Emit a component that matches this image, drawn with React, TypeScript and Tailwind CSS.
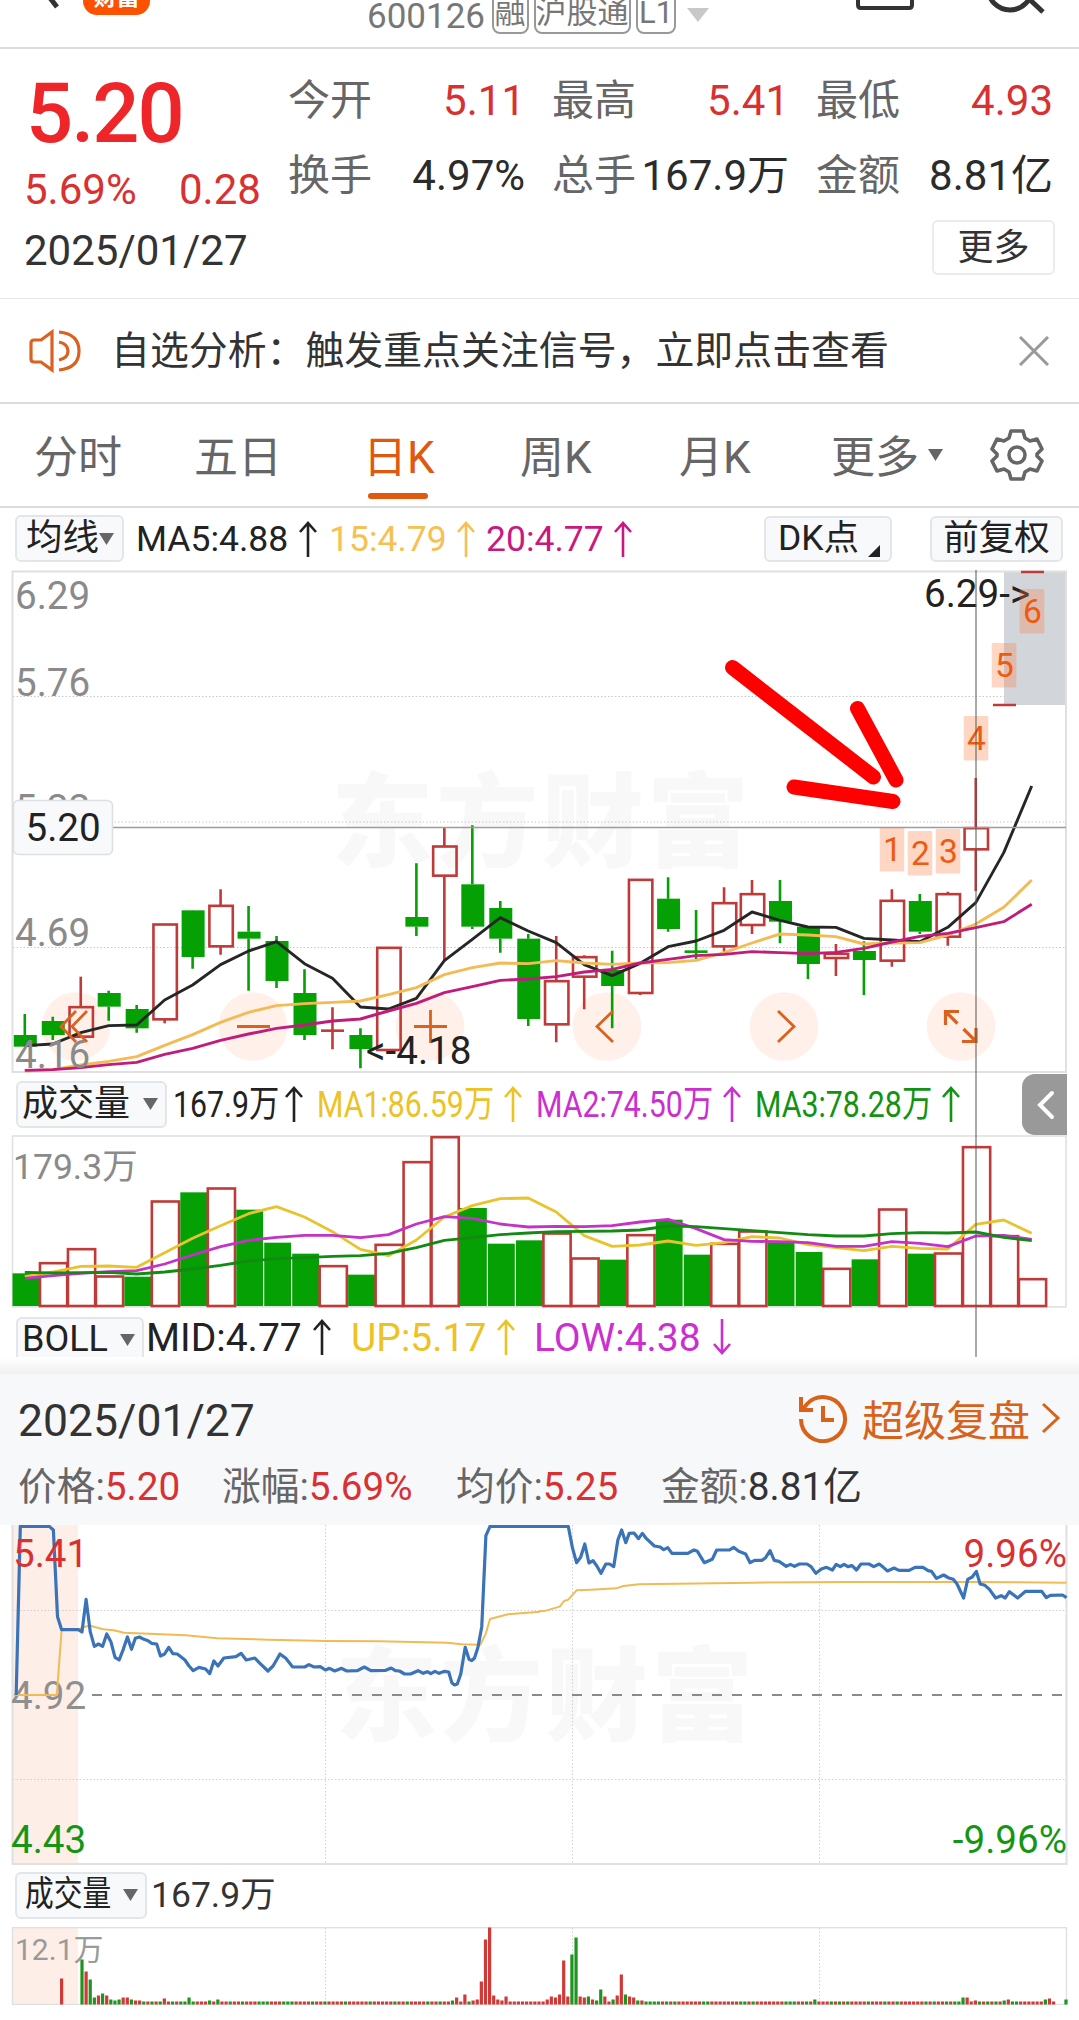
import type { ReactNode } from 'react';

type Candle = ['r' | 'g', number, number, number, number];

// [direction, high, body top, body bottom, low]
const candles: Candle[] = [
  ['g', 612, 675, 710, 710], ['g', 620, 633, 675, 690], ['r', 500, 590, 680, 680], ['g', 542, 549, 590, 632],
  ['g', 585, 597, 655, 668], ['r', 342, 342, 628, 640], ['g', 300, 301, 441, 476], ['r', 238, 286, 409, 434],
  ['g', 288, 365, 386, 542], ['g', 378, 393, 513, 534], ['g', 478, 549, 675, 690], ['r', 592, 662, 662, 718],
  ['g', 655, 675, 717, 775], ['r', 412, 412, 720, 720], ['g', 160, 321, 350, 378], ['r', 54, 108, 197, 450],
  ['g', 46, 223, 350, 357], ['g', 273, 294, 386, 428], ['g', 372, 386, 627, 648], ['r', 378, 512, 643, 697],
  ['r', 436, 440, 500, 598], ['g', 422, 480, 528, 655], ['r', 208, 208, 549, 555], ['g', 202, 266, 357, 365],
  ['g', 300, 425, 425, 447], ['r', 232, 278, 409, 425], ['r', 210, 251, 345, 372], ['g', 210, 273, 335, 400],
  ['g', 350, 350, 462, 507], ['r', 402, 430, 444, 498], ['g', 394, 423, 450, 555], ['r', 238, 271, 452, 470],
  ['g', 252, 273, 365, 372], ['r', 245, 251, 380, 407], ['r', -96, 53, 118, 243],
];

const ma5 = [707, 702, 668, 647, 645, 570, 525, 464, 423, 395, 461, 505, 591, 597, 565, 452, 388, 323, 363, 398, 464, 497, 460, 410, 393, 361, 306, 331, 351, 352, 385, 390, 395, 352, 278, 128, -72];
const ma15 = [783, 779, 765, 754, 740, 706, 674, 637, 607, 587, 581, 577, 573, 554, 533, 494, 473, 459, 461, 452, 459, 463, 459, 458, 451, 428, 399, 372, 375, 380, 402, 399, 398, 375, 342, 292, 210];
const ma20 = [781, 779, 773, 764, 757, 733, 715, 691, 672, 655, 645, 633, 627, 603, 580, 548, 530, 511, 507, 500, 486, 478, 459, 448, 437, 433, 425, 428, 431, 427, 415, 396, 379, 370, 353, 335, 283];

const volumes = [610, 578, 536, 618, 620, 393, 367, 354, 419, 518, 551, 587, 614, 523, 275, 200, 414, 521, 511, 489, 564, 569, 494, 449, 554, 520, 483, 517, 546, 595, 568, 417, 551, 549, 230, 497, 626];
const volumeColors = 'grrrgrgrgggrgrrrgggrrgrggrrggrgrgrrrr';
const vol5 = [620, 606, 589, 588, 592, 548, 505, 467, 431, 410, 441, 485, 538, 557, 510, 441, 407, 386, 384, 426, 497, 529, 525, 513, 526, 518, 500, 504, 524, 533, 542, 529, 535, 537, 463, 450, 490];
const vol10 = [625, 617, 610, 605, 602, 582, 555, 530, 511, 502, 496, 496, 503, 494, 462, 440, 445, 462, 471, 469, 470, 467, 456, 448, 476, 509, 514, 515, 518, 529, 529, 515, 520, 530, 498, 496, 508];
const vol20 = [607, 609, 608, 607, 612, 606, 597, 586, 573, 566, 563, 559, 557, 550, 533, 511, 503, 494, 489, 485, 484, 483, 480, 468, 470, 476, 482, 488, 494, 498, 498, 491, 488, 489, 486, 502, 512];

const priceMorning = '47,975 59,469 143,469 155,480 167,740 179,779 227,779 238,786 250,688 262,785 274,829 286,822 298,829 310,792 322,815 334,862 346,870 358,838 370,801 382,838 393,805 405,801 418,808 430,812 440,820 455,822 466,858 478,852 490,832 502,851 515,852 537,870 549,888 561,902 578,892 597,897 609,911 621,873 633,888 650,864 685,860 700,850 715,870 740,864 755,880 778,903 793,888 813,852 830,865 850,891 885,891 897,884 912,891 930,890 945,900 957,895 972,903 992,895 1007,903 1038,902 1058,891 1077,902 1120,901 1136,894 1148,902 1160,903 1175,912 1192,912 1214,902 1229,910 1241,905 1251,911 1263,904 1275,910 1291,904 1303,906 1312,938 1320,945 1328,942 1338,912 1351,832 1362,868 1370,872 1378,864 1388,832 1399,770 1411,497 1423,469 1570,469';
const priceAfternoon = '0,469 85,469 97,533 109,578 121,562 133,522 145,579 157,572 168,588 180,610 194,582 205,582 217,590 229,510 240,480 252,518 262,490 276,489 289,506 300,490 312,506 335,528 352,531 362,539 374,533 386,550 432,550 450,540 460,544 480,578 503,568 516,540 553,540 565,532 580,544 600,552 613,578 626,571 648,571 658,563 671,542 683,571 697,574 718,589 730,583 742,589 756,582 778,582 790,590 804,610 820,597 835,592 852,600 863,583 875,590 886,583 897,590 909,587 922,600 935,582 958,582 972,590 988,582 1000,592 1012,603 1031,594 1045,601 1075,601 1092,592 1115,592 1130,602 1140,604 1154,625 1175,615 1190,624 1203,628 1214,642 1233,684 1245,628 1258,621 1270,604 1281,642 1295,646 1308,658 1326,684 1342,677 1354,684 1366,665 1390,684 1413,664 1460,664 1473,683 1485,676 1520,675 1532,683';
const avgMorning = '40,975 165,975 179,779 227,779 240,772 262,767 300,778 330,781 360,788 450,792 540,796 630,805 780,809 950,813 1100,814 1300,818 1340,823 1395,824 1411,790 1423,747 1475,733 1568,725';
const avgAfternoon = '0,724 20,722 60,710 73,693 85,689 109,661 150,659 225,655 245,648 290,643 400,641 620,638 900,636 1230,636 1532,638';

const minuteHeights: Record<number, number> = {
  0: 45, 1: 33, 2: 25, 3: 7, 4: 9, 5: 11, 6: 9, 7: 5, 8: 4, 9: 5, 10: 7, 11: 7, 12: 5, 13: 4, 14: 4, 20: 6, 26: 7, 31: 4, 33: 5,
  90: 4, 91: 7, 93: 10, 95: 4, 96: 5, 97: 23, 98: 65, 99: 77, 100: 9, 101: 5, 102: 4, 103: 8,
  113: 5, 114: 8, 115: 7, 116: 10, 117: 44, 118: 8, 119: 50, 120: 67, 121: 8, 122: 7, 123: 8, 124: 5, 125: 4, 126: 15, 127: 8,
  129: 5, 130: 9, 131: 30, 132: 10, 133: 8, 134: 7, 135: 4, 136: 4, 178: 5, 214: 7, 215: 7, 217: 4, 224: 4, 225: 5, 234: 5, 235: 6, 237: 0, 238: 0, 239: 5,
};
const minuteGreen = new Set([
  0, 2, 3, 5, 7, 8, 9, 12, 15, 17, 19, 22, 24, 25, 26, 27, 31, 33, 36, 39, 43, 44, 45, 49, 50, 51, 56, 59, 64, 70, 76, 79, 84, 87, 90, 94,
  119, 120, 123, 125, 126, 129, 132, 135, 137, 138, 139, 140, 142, 144, 151, 152, 160, 161, 163, 171, 172, 173, 176, 178,
  182, 184, 186, 191, 195, 198, 205, 207, 210, 212, 213, 214, 218, 220, 222, 224, 226, 227, 234, 239,
]);

const RED = '#bf3a38';
const GREEN = '#04a004';

const slotX = (i: number) => 24.8 + i * 27.97;
const candleY = (v: number) => 810 + v / 3;
const volumeY = (v: number) => 1070 + v / 3;
const line = (values: number[], y: (v: number) => number) => values.map((v, i) => `${slotX(i)},${y(v)}`).join(' ');

const Arrow = ({ down = false, className = '' }: { down?: boolean; className?: string }) => (
  <svg width="18" height="36" viewBox="0 0 18 36" fill="none" stroke="currentColor" strokeWidth="2.6" className={`shrink-0 ${down ? 'rotate-180' : ''} ${className}`}>
    <path d="M9 36V2M1 11L9 2l8 9" />
  </svg>
);

const Caret = ({ className = '' }: { className?: string }) => (
  <svg width="15" height="12" viewBox="0 0 15 12" className={`shrink-0 ${className}`}>
    <path d="M0 0h15L7.5 12z" fill="currentColor" />
  </svg>
);

// Text drawn narrower than its font, kept in a box of the narrowed width
const Narrow = ({ width, children }: { width: string; children: ReactNode }) => (
  <span className={`inline-block shrink-0 whitespace-nowrap ${width}`}>
    <span className="inline-block origin-left scale-x-[0.81]">{children}</span>
  </span>
);

const Field = ({ label, value, red = false }: { label: string; value: string; red?: boolean }) => (
  <div className="flex h-[75px] w-[237px] items-center justify-between whitespace-nowrap">
    <span className="text-[#666]">{label}</span>
    <span className={red ? 'text-[#d93032]' : 'text-[#2b2b2b]'}>{value}</span>
  </div>
);

const Header = () => (
  <header className="relative h-[49px] overflow-hidden border-b-2 border-[#dcdcdc]">
    <svg width="70" height="12" className="absolute left-0 top-0">
      <path d="M40 -15L57 7" stroke="#333" strokeWidth="5" />
    </svg>
    <div className="absolute -top-10 left-[83px] flex h-[55px] w-[67px] items-end justify-center rounded-[14px] bg-[#fe5100] pb-[5px] text-[23px] font-bold leading-[24px] text-white">财富</div>
    <div className="flex h-[34px] items-center pl-[367px] text-[35px] leading-[34px] text-[#777]">
      <span className="w-[125px]">600126</span>
      <div className="-mt-3 flex gap-[5px] text-[31px] leading-[46px]">
        <span className="h-[46px] w-[37px] rounded-lg border-2 border-[#999] text-center"><span className="-ml-px">融</span></span>
        <span className="h-[46px] w-[97px] rounded-lg border-2 border-[#999] text-center"><span className="-ml-px">沪股通</span></span>
        <span className="h-[46px] w-[40px] rounded-lg border-2 border-[#999] text-center">L1</span>
      </div>
      <svg width="22" height="14" className="ml-[11px] mt-[-4px]"><path d="M0 0h22L11 14z" fill="#c8c8c8" /></svg>
    </div>
    <svg width="220" height="20" className="absolute left-[850px] top-0" fill="none" stroke="#333">
      <path d="M8 -20V5q0 3 3 3h48q3 0 3-3V-20" strokeWidth="4" />
      <circle cx="160" cy="-12" r="22" strokeWidth="5" />
      <path d="M176 -4L193 12" strokeWidth="5" />
    </svg>
  </header>
);

const Quote = () => (
  <section className="h-[250px] border-b border-[#e8e8e8] text-[42px]">
    <div className="flex h-[168px]">
      <div className="w-[288px] shrink-0 pl-[24px] pt-5 text-[#d93032]">
        <div className="h-[90px] pl-[2px] text-[83px] font-medium leading-[90px] tracking-[-2px] text-[#ee2529]">5.20</div>
        <div className="flex h-[60px] items-center">
          <span className="w-[155px]">5.69%</span>
          <span>0.28</span>
        </div>
      </div>
      <div className="flex w-[765px] shrink-0 flex-wrap content-start gap-x-[27px] pt-[14px]">
        <Field label="今开" value="5.11" red />
        <Field label="最高" value="5.41" red />
        <Field label="最低" value="4.93" red />
        <Field label="换手" value="4.97%" />
        <Field label="总手" value="167.9万" />
        <Field label="金额" value="8.81亿" />
      </div>
    </div>
    <div className="flex justify-between pl-[24px] pr-6">
      <span className="h-[68px] leading-[68px] text-[#333]">2025/01/27</span>
      <button className="mt-[3px] h-[55px] w-[123px] rounded-md border-2 border-[#ebebeb] text-[36px] leading-[50px] text-[#333]">更多</button>
    </div>
  </section>
);

const Notice = () => (
  <section className="flex h-[105px] items-center border-b-2 border-[#dcdcdc] pl-7 text-[38.9px] text-[#333]">
    <svg width="54" height="44" viewBox="0 0 54 44" fill="none" stroke="#d9621f" strokeWidth="3.2">
      <path d="M24 3v38L13 33H6q-3 0-3-3V14q0-3 3-3h7zM31 3q20 2 20 19T31 41M31 13q9 2 9 9t-9 9" />
    </svg>
    <span className="ml-[29px] mt-[2px] whitespace-nowrap">自选分析：触发重点关注信号，立即点击查看</span>
    <svg width="30" height="30" className="ml-auto mr-[30px]" stroke="#999" strokeWidth="3"><path d="M1 1l28 28M29 1L1 29" /></svg>
  </section>
);

const Tabs = () => (
  <nav className="flex h-[104px] items-center border-b-2 border-[#dcdcdc] pl-[34px] text-[44px] leading-[60px] text-[#666]">
    <span className="w-[160px] pt-[5px]">分时</span>
    <span className="w-[169px] pt-[5px]">五日</span>
    <span className="relative w-[157px] pt-[5px] text-[#e0590f]">
      日K
      <i className="absolute -bottom-[11px] left-[5px] h-[6px] w-[60px] rounded-full bg-[#e0590f]" />
    </span>
    <span className="w-[159px] pt-[5px]">周K</span>
    <span className="w-[152px] pt-[5px]">月K</span>
    <span className="w-[97px] pt-[5px]">更多</span>
    <Caret />
    <svg width="54" height="54" viewBox="0 0 54 54" className="ml-[47px]" fill="none" stroke="#666" strokeWidth="3.6" strokeLinejoin="round">
      <path d="M21 3h12l2 7 5 3 7-2 5 10-5 5v2l5 5-5 10-7-2-5 3-2 7H21l-2-7-5-3-7 2-5-10 5-5v-2l-5-5L7 11l7 2 5-3z" />
      <circle cx="27" cy="27" r="8" />
    </svg>
  </nav>
);

const AverageBar = () => (
  <div className="flex h-[62px] items-center pl-[15px] text-[35.5px] text-[#222]">
    <div className="mt-[-1px] flex h-[47px] w-[109px] items-center rounded-md border-2 border-[#e3e6e8] bg-[#f7f9fa] pl-[9px] text-[36.5px]">
      均线<Caret className="text-[#666]" />
    </div>
    <span className="ml-[12px] mt-[2px] w-[163px]">MA5:4.88</span>
    <Arrow className="text-[#222]" />
    <span className="ml-[12px] mt-[2px] w-[128px] text-[#f6c052]">15:4.79</span>
    <Arrow className="text-[#f6c052]" />
    <span className="ml-[11px] mt-[2px] w-[128px] text-[#c91882]">20:4.77</span>
    <Arrow className="text-[#c91882]" />
    <div className="ml-auto flex h-[46px] w-[128px] items-center rounded-md border-2 border-[#e3e6e8] bg-[#f7f9fa] pl-[12px]">
      DK点
      <svg width="12" height="12" className="ml-[9px] mt-6"><path d="M12 0v12H0z" fill="#222" /></svg>
    </div>
    <div className="ml-[38px] mr-4 flex h-[46px] w-[133px] items-center justify-center whitespace-nowrap rounded-md border-2 border-[#e3e6e8] bg-[#f7f9fa]">前复权</div>
  </div>
);

const streaks = [
  [1, 892, 827], [2, 920, 831], [3, 948, 829], [4, 976, 716], [5, 1004, 643], [6, 1032, 589],
];

const KLineChart = () => (
  <svg width="1079" height="503" viewBox="0 570 1079 503" className="block" fontSize="38.6">
    <text x="331" y="859" fontSize="102" fontWeight="900" fill="#f8f8f8" textLength="418">东方财富</text>
    <g stroke="#c8c8c8" strokeDasharray="1.5 2">
      <path d="M13 696.5H1066M13 822H1066M13 947.5H1066" />
    </g>
    <rect x="1004" y="571" width="62" height="134" fill="#d2d6db" />
    <rect x="12.5" y="571.5" width="1053.5" height="500.5" fill="none" stroke="#e0e0e0" strokeWidth="2" />
    {[76, 253, 430, 607, 784, 961].map((cx) => (
      <circle key={cx} cx={cx} cy="1026.5" r="34.3" fill="#fff1ea" />
    ))}
    {candles.map(([dir, high, top, bottom, low], i) => {
      const x = slotX(i);
      const color = dir === 'r' ? RED : GREEN;
      const y0 = candleY(top);
      const y1 = candleY(bottom);
      return (
        <g key={i} stroke={color} strokeWidth="2.6">
          <path d={`M${x} ${candleY(high)}V${y0}M${x} ${y1}V${candleY(low)}`} />
          {top === bottom ? (
            <path d={`M${x - 11.5} ${y0}h23`} />
          ) : dir === 'g' ? (
            <rect x={x - 11} y={y0} width="23" height={y1 - y0} fill={GREEN} stroke="none" />
          ) : (
            <rect x={x - 11.2} y={y0 + 0.5} width="23.4" height={y1 - y0 - 0.5} fill="none" />
          )}
        </g>
      );
    })}
    <path d="M1021 572h23M993 705h23" stroke={RED} strokeWidth="2.6" />
    <g fill="none" strokeWidth="2.9" strokeLinejoin="round">
      <polyline points={line(ma5, candleY)} stroke="#262626" />
      <polyline points={line(ma15, candleY)} stroke="#f2bb55" />
      <polyline points={line(ma20, candleY)} stroke="#c01c7c" />
    </g>
    <g fill="#8a8a8a">
      <text x="15" y="609">6.29</text>
      <text x="15" y="696">5.76</text>
      <text x="15" y="822">5.22</text>
      <text x="15" y="946">4.69</text>
      <text x="15" y="1068">4.16</text>
    </g>
    <g stroke="#d9621f" strokeWidth="2.8" fill="none">
      <path d="M76 1011L61 1026.5L76 1042M87 1011L72 1026.5L87 1042" />
      <path d="M237 1026.5h33M414 1026.5h33M430.5 1010v33" />
      <path d="M613 1011L597 1026.5L613 1042M778 1011L794 1026.5L778 1042" />
      <path d="M945.5 1025V1011.500H959M945.5 1011.5L957.500 1023.5M976 1028V1041.5H962M976 1041.5L963.5 1029" strokeWidth="3.2" />
    </g>
    <path d="M113 827.5H1066" stroke="#9c9c9c" strokeWidth="1.6" />
    <g fill="#222">
      <text x="366" y="1064">&lt;-4.18</text>
      <text x="924" y="607">6.29-&gt;</text>
    </g>
    <rect x="13.5" y="800.5" width="99" height="54" rx="5" fill="#f7f9fa" stroke="#dde0e3" strokeWidth="1.5" />
    <text x="25.5" y="841" fill="#222">5.20</text>
    {streaks.map(([n, cx, top]) => (
      <g key={n}>
        <rect x={cx - 12.3} y={top} width="24.6" height="44.5" rx="1.5" fill="#f97c3c" fillOpacity="0.3" />
        <text x={cx + 0.5} y={top + 33.5} fontSize="33.5" textAnchor="middle" fill="#ee5a10">{n}</text>
      </g>
    ))}
    <g stroke="#fe0000" strokeWidth="15" strokeLinecap="round">
      <path d="M732.5 667.5L873.5 777M857.5 708.5L896 780M794 787L893 801.5" />
    </g>
  </svg>
);

const VolumeBar = () => (
  <div className="relative flex h-[62px] items-center pl-4 text-[37.4px]">
    <div className="flex h-[47px] w-[151px] items-center rounded-md border-2 border-[#e3e6e8] bg-[#f7f9fa] pl-[4px] text-[36px] text-[#222]">
      成交量<Caret className="ml-[13px] text-[#666]" />
    </div>
    <div className="ml-[6px] flex items-center text-[#222]"><Narrow width="w-[112px]">167.9万</Narrow><Arrow /></div>
    <div className="ml-[14px] flex items-center text-[#edc224]"><Narrow width="w-[187px]">MA1:86.59万</Narrow><Arrow /></div>
    <div className="ml-[14px] flex items-center text-[#cb2fd0]"><Narrow width="w-[187px]">MA2:74.50万</Narrow><Arrow /></div>
    <div className="ml-[14px] flex items-center text-[#129312]"><Narrow width="w-[187px]">MA3:78.28万</Narrow><Arrow /></div>
    <div className="absolute left-[1022px] top-[1px] flex h-[61px] w-[45px] items-center justify-center rounded-l-[13px] bg-[#999]">
      <svg width="18" height="30" fill="none" stroke="white" strokeWidth="4" strokeLinecap="round" className="ml-[3px]"><path d="M15 3L3 15l12 12" /></svg>
    </div>
  </div>
);

const VolumeChart = () => (
  <svg width="1079" height="173" viewBox="0 1135 1079 173" className="block">
    <rect x="12.5" y="1136" width="1053.5" height="170.8" fill="none" stroke="#e0e0e0" strokeWidth="1.6" />
    <text x="13" y="1179" fontSize="35.5" fill="#8a8a8a">179.3万</text>
    {volumes.map((v, i) => {
      const x = slotX(i);
      const y = volumeY(v);
      return volumeColors[i] === 'g' ? (
        <rect key={i} x={x - 12.3} y={y} width="26.8" height={1306 - y} fill={GREEN} />
      ) : (
        <rect key={i} x={x - 12.8} y={y + 0.5} width="27.2" height={1305.5 - y} fill="none" stroke={RED} strokeWidth="2.6" />
      );
    })}
    <g fill="none" strokeWidth="2.8" strokeLinejoin="round">
      <polyline points={line(vol5, volumeY)} stroke="#e9c32e" />
      <polyline points={line(vol10, volumeY)} stroke="#c233c6" />
      <polyline points={line(vol20, volumeY)} stroke="#138a13" />
    </g>
  </svg>
);

const BollBar = () => (
  <div className="flex h-[49px] overflow-hidden pl-4 text-[39px] leading-[61px]">
    <div className="mt-[9px] flex h-[60px] w-[128px] rounded-md border-2 border-[#e3e6e8] bg-[#f7f9fa] pl-[4px] text-[36px] leading-[40px] text-[#222]">
      BOLL<Caret className="ml-[12px] mt-[15px] text-[#666]" />
    </div>
    <div className="ml-[2px] flex text-[#222]"><span className="w-[167px]">MID:4.77</span><Arrow className="mt-[11px]" /></div>
    <div className="ml-[20px] flex text-[#edc224]"><span className="w-[146px]">UP:5.17</span><Arrow className="mt-[11px]" /></div>
    <div className="ml-[19px] flex text-[#cb2fd0]"><span className="w-[179px]">LOW:4.38</span><Arrow down className="mt-[11px]" /></div>
  </div>
);

const Summary = ({ label, value, className }: { label: string; value: string; className: string }) => (
  <span className={`whitespace-nowrap ${className}`}><span className="text-[#666]">{label}:</span>{value}</span>
);

const DayDetail = () => (
  <section className="h-[151px] bg-[#f7f8fa]">
    <div className="flex h-[92px] items-center justify-between px-[18px]">
      <span className="mt-[2px] text-[44.5px] text-[#333]">2025/01/27</span>
      <div className="flex items-center text-[42px] text-[#d9621a]">
        <svg width="50" height="50" viewBox="0 0 50 50" fill="none" stroke="currentColor" strokeWidth="4" className="-mt-1 mr-[14px]">
          <path d="M3 26A22 22 0 1 0 9 11L5 16" />
          <path d="M3 4v13h12M25 13v14h11" />
        </svg>
        <span className="mt-[2px]">超级复盘</span>
        <svg width="20" height="32" fill="none" stroke="currentColor" strokeWidth="3" className="-mt-1 ml-[11px]"><path d="M2 2l15 14L2 30" /></svg>
      </div>
    </div>
    <div className="mt-[-2px] flex h-[46px] items-center pl-[18px] text-[38.7px]">
      <Summary label="价格" value="5.20" className="w-[204px] text-[#d93032]" />
      <Summary label="涨幅" value="5.69%" className="w-[234px] text-[#d93032]" />
      <Summary label="均价" value="5.25" className="w-[205px] text-[#d93032]" />
      <Summary label="金额" value="8.81亿" className="text-[#333]" />
    </div>
  </section>
);

const IntradayChart = () => (
  <svg width="1079" height="340" viewBox="0 1525 1079 340" className="block" fontSize="38.6">
    <text x="335" y="1733" fontSize="102" fontWeight="900" fill="#f8f8f8" textLength="418">东方财富</text>
    <rect x="13" y="1525" width="65" height="339" fill="#fdeee8" />
    <path d="M13 1610.5H1066M13 1779.5H1066M325.5 1525V1864M572.5 1525V1864M819.5 1525V1864" stroke="#cfcfcf" strokeDasharray="1.5 2" />
    <path d="M12.5 1525V1864H1066.5V1525" fill="none" stroke="#e0e0e0" strokeWidth="2" />
    <path d="M92 1695H1066" stroke="#8a8a8a" strokeWidth="2" strokeDasharray="10 10" />
    <text x="11" y="1709" fill="#8f8f8f">4.92</text>
    <g fill="#149614">
      <text x="11" y="1853">4.43</text>
      <text x="1067" y="1853" textAnchor="end">-9.96%</text>
    </g>
    <g fill="none" strokeLinejoin="round">
      <g stroke="#f0bb55" strokeWidth="2">
        <polyline points={avgMorning} transform="translate(0 1370) scale(0.34436 0.33333)" vectorEffect="non-scaling-stroke" />
        <polyline points={avgAfternoon} transform="translate(539 1370) scale(0.34436 0.33333)" vectorEffect="non-scaling-stroke" />
      </g>
      <g stroke="#3a73b7" strokeWidth="3.2">
        <polyline points={priceMorning} transform="translate(0 1370) scale(0.34436 0.33333)" vectorEffect="non-scaling-stroke" />
        <polyline points={priceAfternoon} transform="translate(539 1370) scale(0.34436 0.33333)" vectorEffect="non-scaling-stroke" />
      </g>
    </g>
    <g fill="#d93032">
      <text x="13" y="1567">5.41</text>
      <text x="1067" y="1567" textAnchor="end">9.96%</text>
    </g>
  </svg>
);

const MinuteVolume = () => (
  <svg width="1079" height="78" viewBox="0 1927 1079 78" className="block">
    <rect x="13" y="1928" width="65" height="76" fill="#fdeee8" />
    <path d="M325.5 1928V2004M572.5 1928V2004M819.5 1928V2004" stroke="#cfcfcf" strokeDasharray="1.5 2" />
    <rect x="12.5" y="1927.7" width="1054" height="76.8" fill="none" stroke="#e0e0e0" strokeWidth="1.4" />
    <text x="15" y="1960" fontSize="30" fill="#9a9a9a">12.1万</text>
    <rect x="60" y="1978.5" width="3.2" height="26" fill="#cf3a38" />
    {Array.from({ length: 240 }, (_, i) => {
      const h = minuteHeights[i] ?? 3;
      return <rect key={i} x={80.4 + i * 4.117} y={2004.5 - h} width="3.2" height={h} fill={minuteGreen.has(i) ? '#1f951f' : '#cf3a38'} />;
    })}
  </svg>
);

export default function App() {
  return (
    <div className="h-[2020px] w-[1079px] overflow-hidden bg-white font-[Roboto,'Noto_Sans_CJK_SC',sans-serif]">
      <Header />
      <Quote />
      <Notice />
      <Tabs />
      <AverageBar />
      <div className="relative">
        <KLineChart />
        <VolumeBar />
        <VolumeChart />
        <BollBar />
        {/* Crosshair through all three daily panels */}
        <i className="absolute bottom-0 left-[975px] top-0 w-[2px] bg-[#555]/50" />
      </div>
      <div className="h-[17px] bg-gradient-to-b from-white to-[#f0f0f1]" />
      <DayDetail />
      <IntradayChart />
      <div className="flex h-[62px] items-center pl-[15px] text-[35.5px] text-[#333]">
        <div className="-mt-[2px] mr-[4px] flex h-[47px] w-[132px] items-center rounded-md border-2 border-[#e3e6e8] bg-[#f7f9fa] pl-[8px] text-[#222]">
          <Narrow width="w-[98px]">成交量</Narrow>
          <Caret className="text-[#666]" />
        </div>
        167.9万
      </div>
      <MinuteVolume />
    </div>
  );
}
